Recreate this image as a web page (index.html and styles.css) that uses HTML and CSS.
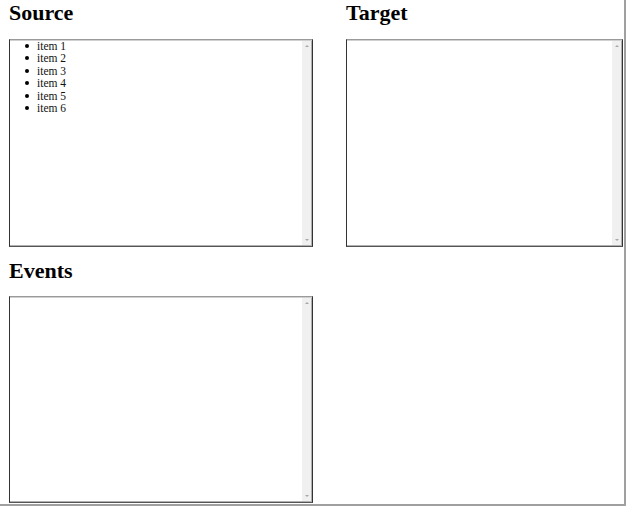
FILE: index.html
```
<!DOCTYPE html>
<html>
<head>
<meta charset="utf-8">
<link rel="stylesheet" href="styles.css">
</head>
<body>
<div class="frame">
  <div class="grid">
    <section class="panel">
      <h2 class="title">Source</h2>
      <div class="box">
        <div class="content">
          <ul class="list">
            <li>item 1</li>
            <li>item 2</li>
            <li>item 3</li>
            <li>item 4</li>
            <li>item 5</li>
            <li>item 6</li>
          </ul>
        </div>
        <div class="bar"><span class="up"></span><span class="down"></span></div>
      </div>
    </section>
    <section class="panel">
      <h2 class="title">Target</h2>
      <div class="box">
        <div class="content"></div>
        <div class="bar"><span class="up"></span><span class="down"></span></div>
      </div>
    </section>
    <section class="panel second">
      <h2 class="title">Events</h2>
      <div class="box short">
        <div class="content"></div>
        <div class="bar"><span class="up"></span><span class="down"></span></div>
      </div>
    </section>
  </div>
</div>
</body>
</html>
```
FILE: styles.css
```
html, body {
  margin: 0;
  padding: 0;
  background: #fff;
}
.frame {
  width: 624px;
  height: 504px;
  border-right: 2px solid #a0a0a0;
  border-bottom: 2px solid #a0a0a0;
  overflow: hidden;
  font-family: "Liberation Serif", "Times New Roman", serif;
  color: #000;
}
.grid {
  display: grid;
  grid-template-columns: 304px 277px;
  column-gap: 33px;
  padding-left: 9px;
}
.panel {
  display: flex;
  flex-direction: column;
}
.panel.second {
  margin-top: 11px;
}
.title {
  font-size: 22px;
  line-height: 25px;
  font-weight: bold;
  margin: 0 0 14px 0;
}
.second .title {
  margin-bottom: 13px;
}
.box {
  height: 206px;
  display: flex;
  border-top: 1px solid #9a9a9a;
  border-left: 1px solid #333;
  border-bottom: 1px solid #555;
  border-right: 1px solid #333;
  box-shadow: inset 0 1px 0 #d0d0d0, inset 0 -1px 0 #b0b0b0, inset -1px 0 0 #b0b0b0;
}
.box.short {
  height: 205px;
}
.content {
  flex: 1;
}
.list {
  margin: 0;
  padding-left: 27px;
  list-style: none;
  font-size: 11.5px;
  line-height: 12.4px;
  color: #111;
}
.list li::before {
  content: "";
  display: inline-block;
  width: 4px;
  height: 4px;
  border-radius: 50%;
  background: #000;
  margin-left: -12px;
  margin-right: 8px;
  vertical-align: 2px;
}
.bar {
  width: 9px;
  margin: 1px 1px 1px 0;
  background: #f0f0f0;
  display: flex;
  flex-direction: column;
  justify-content: space-between;
  align-items: center;
  padding: 4px 0;
}
.up, .down {
  width: 0;
  height: 0;
  border-left: 2px solid transparent;
  border-right: 2px solid transparent;
}
.up {
  border-bottom: 2px solid #a8a8a8;
}
.down {
  border-top: 2px solid #a8a8a8;
}
```
